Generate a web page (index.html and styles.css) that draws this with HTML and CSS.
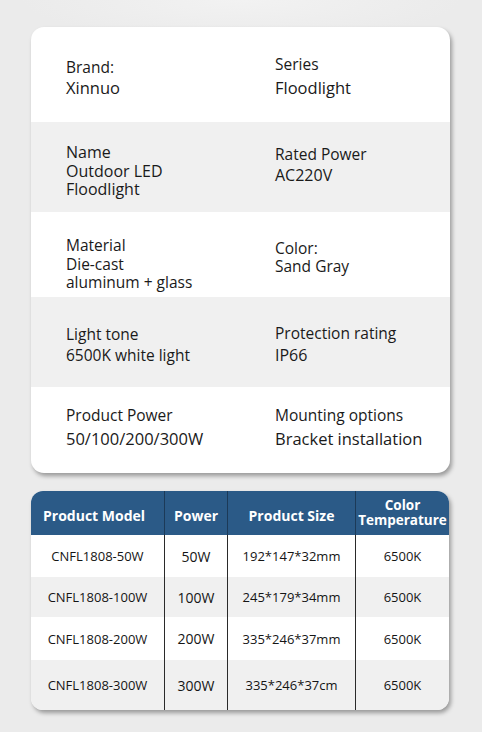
FILE: index.html
```html
<!DOCTYPE html>
<html>
<head>
<meta charset="utf-8">
<link rel="stylesheet" href="styles.css">
</head>
<body>
<div class="page">
  <div class="spec-card">
    <div class="row r1">
      <div class="cell c-l1"><div>Brand:</div><div class="val">Xinnuo</div></div>
      <div class="cell c-r1"><div>Series</div><div class="val">Floodlight</div></div>
    </div>
    <div class="row r2 shade">
      <div class="cell c-l2"><div>Name</div><div>Outdoor LED<br>Floodlight</div></div>
      <div class="cell c-r2"><div>Rated Power</div><div class="val">AC220V</div></div>
    </div>
    <div class="row r3">
      <div class="cell c-l3"><div>Material</div><div>Die-cast<br>aluminum + glass</div></div>
      <div class="cell c-r3"><div>Color:</div><div>Sand Gray</div></div>
    </div>
    <div class="row r4 shade">
      <div class="cell c-l4"><div>Light tone</div><div class="small">6500K white light</div></div>
      <div class="cell c-r4"><div>Protection rating</div><div class="val">IP66</div></div>
    </div>
    <div class="row r5">
      <div class="cell c-l5"><div>Product Power</div><div class="val">50/100/200/300W</div></div>
      <div class="cell c-r5"><div>Mounting options</div><div class="val">Bracket installation</div></div>
    </div>
  </div>

  <div class="table-card">
    <div class="trow thead">
      <div class="tc">Product Model</div>
      <div class="tc">Power</div>
      <div class="tc">Product Size</div>
      <div class="tc ct">Color<br>Temperature</div>
    </div>
    <div class="trow tb1">
      <div class="tc">CNFL1808-50W</div>
      <div class="tc">50W</div>
      <div class="tc">192*147*32mm</div>
      <div class="tc">6500K</div>
    </div>
    <div class="trow tb2 shade">
      <div class="tc">CNFL1808-100W</div>
      <div class="tc">100W</div>
      <div class="tc">245*179*34mm</div>
      <div class="tc">6500K</div>
    </div>
    <div class="trow tb3">
      <div class="tc">CNFL1808-200W</div>
      <div class="tc">200W</div>
      <div class="tc">335*246*37mm</div>
      <div class="tc">6500K</div>
    </div>
    <div class="trow tb4 shade">
      <div class="tc">CNFL1808-300W</div>
      <div class="tc">300W</div>
      <div class="tc">335*246*37cm</div>
      <div class="tc">6500K</div>
    </div>
  </div>
</div>
</body>
</html>
```
FILE: styles.css
```css
html, body {
  margin: 0;
  padding: 0;
}
body {
  width: 482px;
  height: 732px;
  overflow: hidden;
  background: radial-gradient(ellipse 220px 40px at 50% 0, #f2f2f2, #ebebeb 100%);
  background-color: #ebebeb;
  font-family: "Open Sans", "Noto Sans", sans-serif;
  color: #1a1a1a;
}
.page {
  padding: 27px 0 0 31px;
}
.spec-card {
  width: 419px;
  background: #fff;
  border-radius: 13px;
  overflow: hidden;
  box-shadow: 2px 3px 4px rgba(0, 0, 0, 0.35);
  font-size: 15.5px;
}
.row {
  display: grid;
  grid-template-columns: 209px 1fr;
  padding-left: 35px;
  box-sizing: border-box;
}
.shade {
  background: #f0f0f0;
}
.cell {
  display: flex;
  flex-direction: column;
  line-height: 19px;
}
.val {
  font-size: 16.5px;
}
.r1 { height: 95px; }
.r2 { height: 90px; }
.r3 { height: 85px; }
.r4 { height: 90px; }
.r5 { height: 86px; }

.c-l1 { padding-top: 31px; gap: 1px; }
.c-r1 { padding-top: 28px; gap: 4px; }
.c-l2 { padding-top: 21px; line-height: 18.5px; font-size: 16px; }
.c-r2 { padding-top: 23px; gap: 2px; }
.c-r2 .val { font-size: 16px; }
.c-l3 { padding-top: 24px; line-height: 18.5px; }
.c-r3 { padding-top: 28px; line-height: 17.5px; }
.c-l4 { padding-top: 28px; gap: 2px; }
.c-l4 .small { font-size: 15.5px; }
.c-r4 { padding-top: 27px; gap: 3px; }
.c-r4 .val { font-size: 16px; }
.c-l5 { padding-top: 19px; gap: 4px; }
.c-r5 { padding-top: 19px; gap: 4px; }

.table-card {
  width: 418px;
  margin-top: 18px;
  border-radius: 12px;
  overflow: hidden;
  background: #fff;
  box-shadow: 2px 3px 4px rgba(0, 0, 0, 0.35);
  font-size: 13px;
  color: #151515;
}
.trow {
  display: grid;
  grid-template-columns: 134px 63px 128px 1fr;
}
.tc {
  display: flex;
  align-items: center;
  justify-content: center;
  text-align: center;
  border-right: 1px solid #2a2a2a;
}
.tc:last-child {
  border-right: none;
}
.thead {
  height: 44px;
  background: #2b5a87;
  color: #fff;
  font-weight: 700;
  font-size: 14px;
}
.thead .tc {
  border-right-color: #1c3a58;
  padding-top: 4px;
}
.thead .tc:first-child {
  justify-content: flex-start;
  padding-left: 12px;
}
.thead .ct {
  font-size: 13.5px;
  line-height: 15px;
  padding-top: 0;
}
.tb1 { height: 42px; }
.tb2 { height: 40px; }
.tb3 { height: 43px; }
.tb4 { height: 50px; }
.trow .tc:nth-child(2) {
  font-size: 14px;
}
```
